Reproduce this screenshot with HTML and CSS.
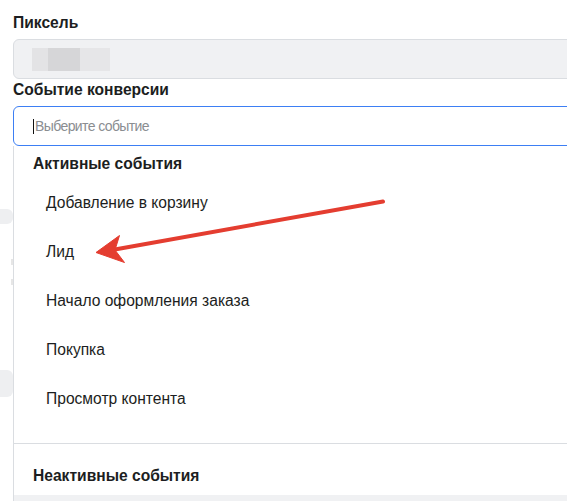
FILE: index.html
```html
<!DOCTYPE html>
<html lang="ru">
<head>
<meta charset="utf-8">
<link rel="stylesheet" href="styles.css">
</head>
<body>
<div class="page">
  <div class="field">
    <div class="label">Пиксель</div>
    <div class="input input-disabled">
      <span class="blur"><span class="b1"></span><span class="b2"></span><span class="b3"></span></span>
    </div>
  </div>
  <div class="field">
    <div class="label label-second">Событие конверсии</div>
    <div class="select-wrap">
      <div class="input input-focus"><span class="caret"></span><span class="placeholder">Выберите событие</span></div>
      <div class="backdrop">
        <div class="ghost g1"></div>
        <div class="ghost g2"></div>
        <div class="ghost g3"></div>
        <div class="ghost g4"></div>
      </div>
      <div class="menu">
        <div class="group-title">Активные события</div>
        <ul class="items">
          <li>Добавление в корзину</li>
          <li>Лид</li>
          <li>Начало оформления заказа</li>
          <li>Покупка</li>
          <li>Просмотр контента</li>
        </ul>
        <div class="divider"></div>
        <div class="group-title group-inactive">Неактивные события</div>
        <div class="hover-row"></div>
      </div>
      <svg class="arrow" width="567" height="501" viewBox="0 0 567 501" xmlns="http://www.w3.org/2000/svg">
        <line x1="383" y1="201.5" x2="112" y2="250" stroke="#e43d30" stroke-width="4" stroke-linecap="round"/>
        <path d="M96 252.5 L119.5 235.5 L115 250 L124.5 262.5 Z" fill="#e43d30" stroke="#e43d30" stroke-width="1" stroke-linejoin="round"/>
      </svg>
    </div>
  </div>
</div>
</body>
</html>
```

FILE: styles.css
```css
* { box-sizing: border-box; }
html, body { margin: 0; padding: 0; background: #fff; }
body {
  font-family: "Liberation Sans", Arial, sans-serif;
  color: #1c1e21;
  overflow: hidden;
  width: 567px;
  height: 501px;
}
.page {
  padding: 14px 0 0 13px;
  width: 600px;
}
.label {
  font-weight: bold;
  font-size: 15.6px;
  line-height: 18px;
  color: #1c1e21;
  height: 25px;
}
.label-second {
  height: 25px;
}
.input {
  height: 40px;
  border-radius: 6px;
  border: 1px solid #dadde1;
  display: flex;
  align-items: center;
}
.input-disabled {
  background: #f0f1f3;
  padding-left: 18px;
  margin-bottom: 2px;
}
.blur { display: flex; }
.blur span { display: block; height: 23px; }
.b1 { width: 16px; background: #e3e3e5; }
.b2 { width: 32px; background: #d6d6d8; }
.b3 { width: 30px; background: #e6e6e8; }
.input-focus {
  border-color: #3d7ff4;
  background: #fff;
  padding-left: 19px;
  position: relative;
  z-index: 2;
}
.caret {
  width: 1px;
  height: 15px;
  background: #111;
  margin-right: 1px;
}
.placeholder {
  font-size: 14px;
  letter-spacing: -0.6px;
  color: #8a8d91;
}
.select-wrap { position: relative; }
.backdrop { position: absolute; left: -13px; top: 0; width: 14px; height: 400px; }
.ghost { position: absolute; left: 0; background: #eeeff1; border-radius: 0 6px 6px 0; width: 13px; }
.g1 { top: 103px; height: 15px; }
.g2 { top: 264px; height: 27px; }
.g3 { top: 153px; height: 6px; width: 2px; left: 11px; background: #e6e6e6; border-radius: 0; }
.g4 { top: 173px; height: 6px; width: 2px; left: 11px; background: #e6e6e6; border-radius: 0; }
.menu {
  position: absolute;
  left: 0;
  top: 40px;
  width: 600px;
  height: 400px;
  background: #fff;
  border-left: 1px solid #dadde1;
  z-index: 1;
}
.group-title {
  font-weight: bold;
  font-size: 15.6px;
  line-height: 18px;
  padding: 9px 0 5px 19px;
  color: #1c1e21;
}
.items {
  list-style: none;
  margin: 0;
  padding: 0 0 20px 0;
}
.items li {
  font-size: 15.6px;
  line-height: 18px;
  padding: 15.5px 0 15.5px 32px;
  height: 49px;
}
.divider { height: 1px; background: #dadde1; }
.group-inactive { padding-top: 23px; padding-bottom: 10px; }
.hover-row { height: 20px; background: #f0f1f3; }
.arrow {
  position: absolute;
  left: -13px;
  top: -106px;
  z-index: 3;
  pointer-events: none;
}
```
